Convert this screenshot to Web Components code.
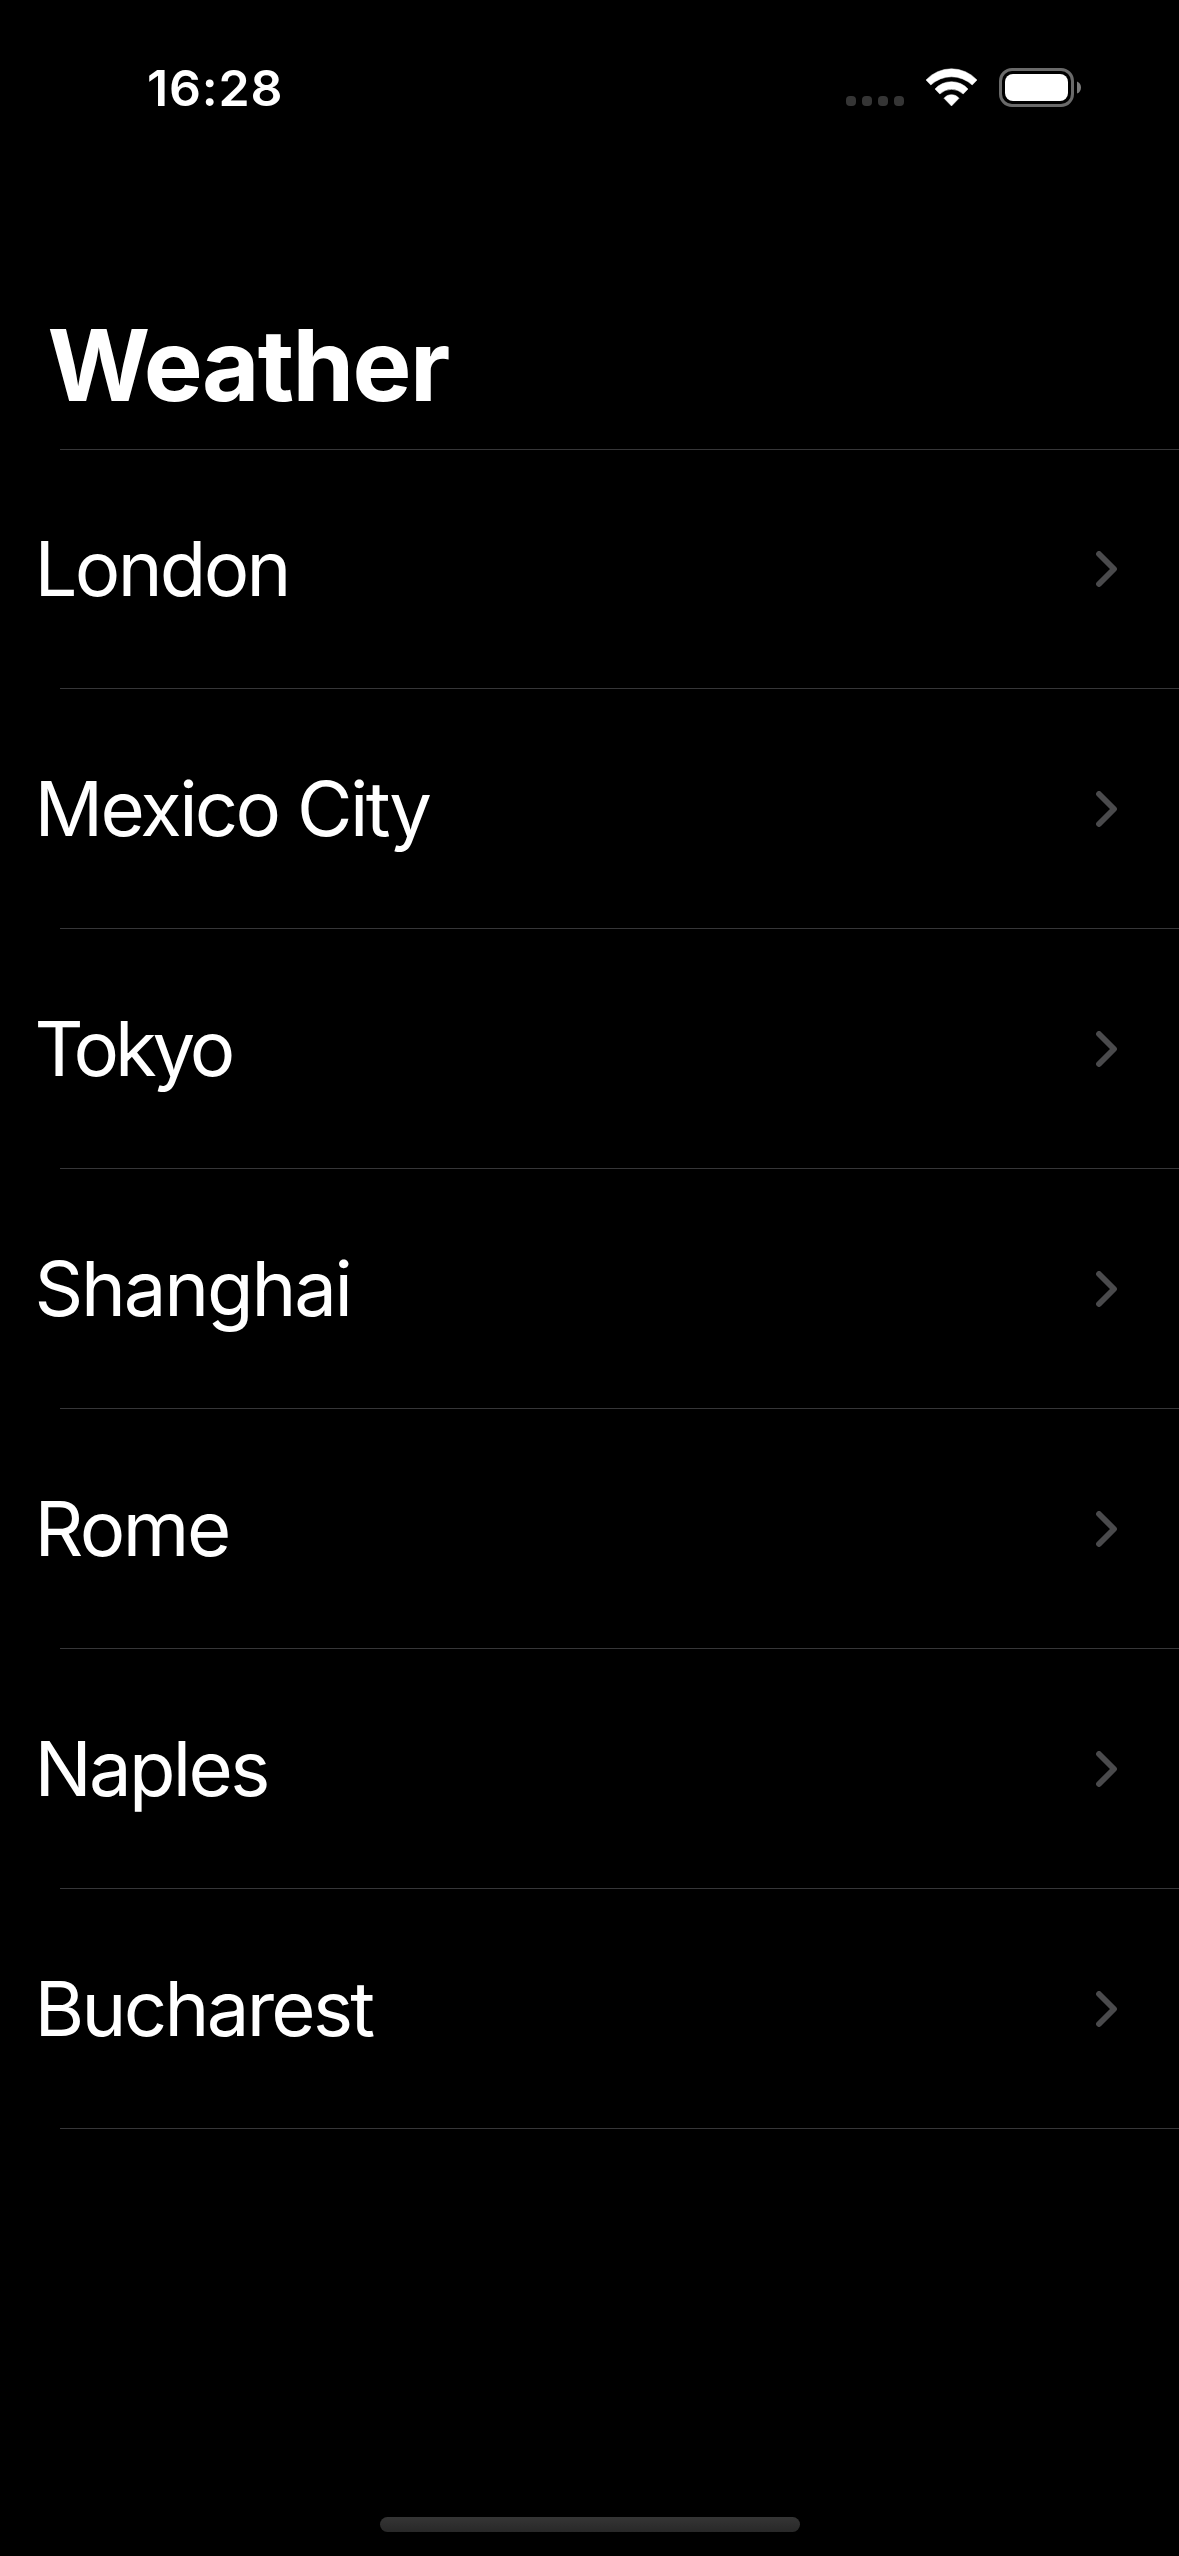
<!DOCTYPE html>
<html lang="en">
<head>
<meta charset="utf-8">
<title>Weather</title>
<style>
html, body { margin: 0; background: #000; }
body { font-family: Inter, "Liberation Sans", sans-serif; color: #fff; }
</style>
</head>
<body>
<template id="status-bar">
<style>
:host { display: flex; justify-content: space-between; align-items: flex-end; box-sizing: border-box; height: 108px; padding: 0 98px 1px 147px; }
time { font-size: 50px; font-weight: 600; line-height: 60px; letter-spacing: .8px; margin-bottom: -11px; }
.icons { display: flex; align-items: flex-end; }
svg { display: block; }
.cell { margin: 0 22px 1px 0; }
.wifi { margin: 0 22px 1px 0; }
</style>
<time><slot></slot></time>
<div class="icons">
<svg class="cell" width="58" height="10" fill="#353535"><rect width="10" height="10" rx="4"/><rect x="16" width="10" height="10" rx="4"/><rect x="32" width="10" height="10" rx="4"/><rect x="48" width="10" height="10" rx="4"/></svg>
<svg class="wifi" width="51" height="38" fill="#fff"><path d="M0 12A34.6 34.6 0 0 1 51 12L46.2 17A30.2 30.2 0 0 0 4.8 17ZM9 21A22.3 22.3 0 0 1 42 21L37.2 26A16.9 16.9 0 0 0 13.8 26ZM18 30.3A9.5 9.5 0 0 1 33 30.3L25.5 38Z" stroke="#fff" stroke-width=".5" stroke-linejoin="round"/></svg>
<svg class="battery" width="82" height="39"><rect x="1.5" y="1.5" width="72" height="36" rx="11.5" fill="none" stroke="#6a6a6a" stroke-width="3"/><rect x="6" y="6" width="63" height="27" rx="8" fill="#fff"/><path d="M78 13.4C80.5 14.3 82 16.5 82 19.5S80.5 24.7 78 25.6Z" fill="#7c7c7c"/></svg>
</div>
</template>
<template id="nav-title">
<style>
:host { display: block; box-sizing: border-box; height: 341px; padding: 197px 0 0 47.5px; }
h1 { margin: 0; font-size: 99px; font-weight: 700; line-height: 120px; letter-spacing: -1.65px; }
</style>
<h1><slot></slot></h1>
</template>
<template id="city-row">
<style>
:host { display: block; }
.row { display: flex; justify-content: space-between; align-items: flex-end; height: 239px; padding: 0 61px 0 34.5px; }
:host(:first-child) .row { height: 238px; }
.name { font-size: 76px; line-height: 92px; letter-spacing: var(--track, -2.7px); padding-bottom: 74px; white-space: nowrap; }
svg { display: block; margin-bottom: 101px; }
.rule { height: 1px; margin-left: 60px; background: #363638; }
</style>
<div class="row"><span class="name"><slot></slot></span>
<svg width="22" height="36" fill="none" stroke="#4a4a4c" stroke-width="5.8" stroke-linecap="round" stroke-linejoin="round"><path d="M3 3L18 18L3 33"/></svg></div>
<div class="rule"></div>
</template>
<template id="city-list">
<style>
:host { display: block; }
.top { height: 1px; margin-left: 60px; background: #363638; }
</style>
<div class="top"></div><slot></slot>
</template>
<template id="home-indicator">
<style>
:host { display: flex; justify-content: center; padding-bottom: 24px; }
div { width: 420px; height: 15px; border-radius: 7.5px; background: linear-gradient(#353535, #282828); }
</style>
<div></div>
</template>
<template id="weather-app">
<style>
:host { display: flex; flex-direction: column; width: 1179px; height: 2556px; overflow: hidden; background: #000; }
main { flex: 1; }
</style>
<slot name="status"></slot><slot name="title"></slot><main><slot></slot></main><slot name="home"></slot>
</template>

<weather-app>
<status-bar slot="status">16:28</status-bar>
<nav-title slot="title">Weather</nav-title>
<city-list>
<city-row>London</city-row>
<city-row>Mexico City</city-row>
<city-row style="--track:-4.1px">Tokyo</city-row>
<city-row style="--track:-2.2px">Shanghai</city-row>
<city-row style="--track:-2.5px">Rome</city-row>
<city-row>Naples</city-row>
<city-row>Bucharest</city-row>
</city-list>
<home-indicator slot="home"></home-indicator>
</weather-app>
<script>
class TemplateElement extends HTMLElement {
  constructor() {
    super();
    this.attachShadow({ mode: 'open' }).append(
      document.getElementById(this.localName).content.cloneNode(true));
  }
}
for (const name of ['weather-app', 'status-bar', 'nav-title', 'city-list', 'city-row', 'home-indicator'])
  customElements.define(name, class extends TemplateElement {});
</script>
</body>
</html>
